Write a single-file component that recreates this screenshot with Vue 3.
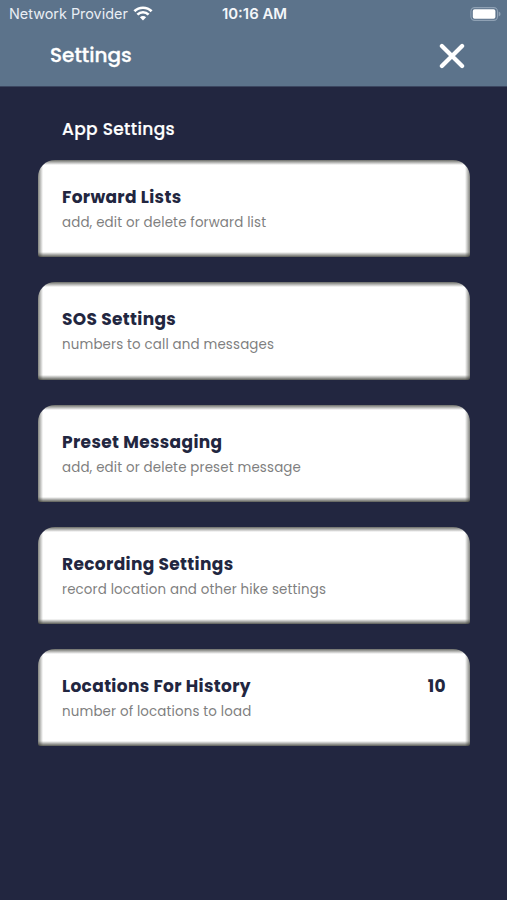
<script setup>
const cards = [
  { title: 'Forward Lists', text: 'add, edit or delete forward list' },
  { title: 'SOS Settings', text: 'numbers to call and messages' },
  { title: 'Preset Messaging', text: 'add, edit or delete preset message' },
  { title: 'Recording Settings', text: 'record location and other hike settings' },
  { title: 'Locations For History', text: 'number of locations to load', value: '10' },
]
</script>

<template>
  <div class="screen">
    <header class="header">
      <div class="status">
        <div class="carrier">
          <span>Network Provider</span>
          <svg class="wifi" viewBox="0 0 20 15" aria-hidden="true">
            <g fill="none" stroke="#fff" stroke-width="2.7">
              <path d="M1.4 5.3A12.2 12.2 0 0 1 18.6 5.3" />
              <path d="M4.4 8.6A7.9 7.9 0 0 1 15.6 8.6" />
            </g>
            <path d="M6.9 11.2A4.4 4.4 0 0 1 13.1 11.2L10 14.4Z" fill="#fff" />
          </svg>
        </div>
        <span class="time">10:16 AM</span>
        <svg class="battery" viewBox="0 0 31 14" aria-hidden="true">
          <rect x="0.9" y="0.6" width="26.6" height="12.8" rx="3.8" fill="none" stroke="#8fa1b4" stroke-width="1.1" />
          <rect x="2.8" y="2.3" width="22.6" height="9.4" rx="1.8" fill="#fff" />
          <path d="M28.7 4.6Q30.6 5.4 30.6 7T28.7 9.4Z" fill="#8fa1b4" />
        </svg>
      </div>
      <div class="bar">
        <h1>Settings</h1>
        <svg class="close" viewBox="0 0 26 26" aria-label="Close">
          <path d="M2.9 2.9L23.1 23.1M23.1 2.9L2.9 23.1" stroke="#fff" stroke-width="4.2" stroke-linecap="round" />
        </svg>
      </div>
    </header>
    <main class="content">
      <h2>App Settings</h2>
      <section v-for="card in cards" :key="card.title" class="card">
        <div>
          <h3>{{ card.title }}</h3>
          <p>{{ card.text }}</p>
        </div>
        <span v-if="card.value" class="value">{{ card.value }}</span>
      </section>
    </main>
  </div>
</template>

<style>
body {
  background: #222640;
}
</style>

<style scoped>
.screen {
  height: 900px;
  overflow: hidden;
  background: #222640;
  color: #fff;
  font-family: Poppins, Inter, sans-serif;
}
h1, h2, h3, p {
  margin: 0;
}
.header {
  height: 87px;
  background: #5c738b;
  border-bottom: 1px solid #3b4660;
  box-sizing: border-box;
}
.status {
  display: grid;
  grid-template-columns: 1fr auto 1fr;
  align-items: center;
  height: 27px;
  padding: 0 7px 0 9px;
  font-family: Inter, sans-serif;
}
.carrier {
  display: flex;
  align-items: center;
  gap: 5px;
  font-size: 14.4px;
  color: #e9eef4;
  white-space: nowrap;
}
.wifi {
  width: 20px;
  height: 15px;
}
.time {
  font-size: 14.9px;
  font-weight: 600;
  color: #f4f7fa;
}
.battery {
  width: 31px;
  height: 14px;
  margin-right: -1px;
  justify-self: end;
}
.bar {
  display: flex;
  align-items: center;
  justify-content: space-between;
  height: 58px;
  padding: 0 42px 0 50px;
}
h1 {
  margin-bottom: 2px;
  font-size: 20px;
  font-weight: 500;
  line-height: 30px;
  -webkit-text-stroke: 0.3px #fff;
}
.close {
  width: 26px;
  height: 26px;
}
.content {
  padding: 27px 37px 0 38px;
}
h2 {
  padding-left: 24px;
  margin-bottom: 16px;
  font-size: 17px;
  font-weight: 500;
  line-height: 30px;
  letter-spacing: 0.34px;
  -webkit-text-stroke: 0.2px #fff;
}
.card {
  display: flex;
  justify-content: space-between;
  box-sizing: border-box;
  height: 97.25px;
  margin-bottom: 25px;
  padding: 24px 24px 0;
  background:
    linear-gradient(to bottom, rgba(50, 52, 45, 0.72), transparent 5px),
    linear-gradient(to top, rgba(50, 52, 45, 0.8), transparent 5px),
    linear-gradient(to right, rgba(50, 52, 45, 0.62), transparent 5px),
    linear-gradient(to left, rgba(50, 52, 45, 0.62), transparent 5px),
    #fff;
  border-radius: 17px 17px 2px 2px;
  color: #222640;
}
h3, .value {
  font-size: 17px;
  font-weight: 700;
  line-height: 26px;
  letter-spacing: 0.34px;
}
p {
  padding-top: 1px;
  font-size: 13.4px;
  line-height: 24px;
  letter-spacing: 0.15px;
  color: #7f7f7f;
}
</style>
